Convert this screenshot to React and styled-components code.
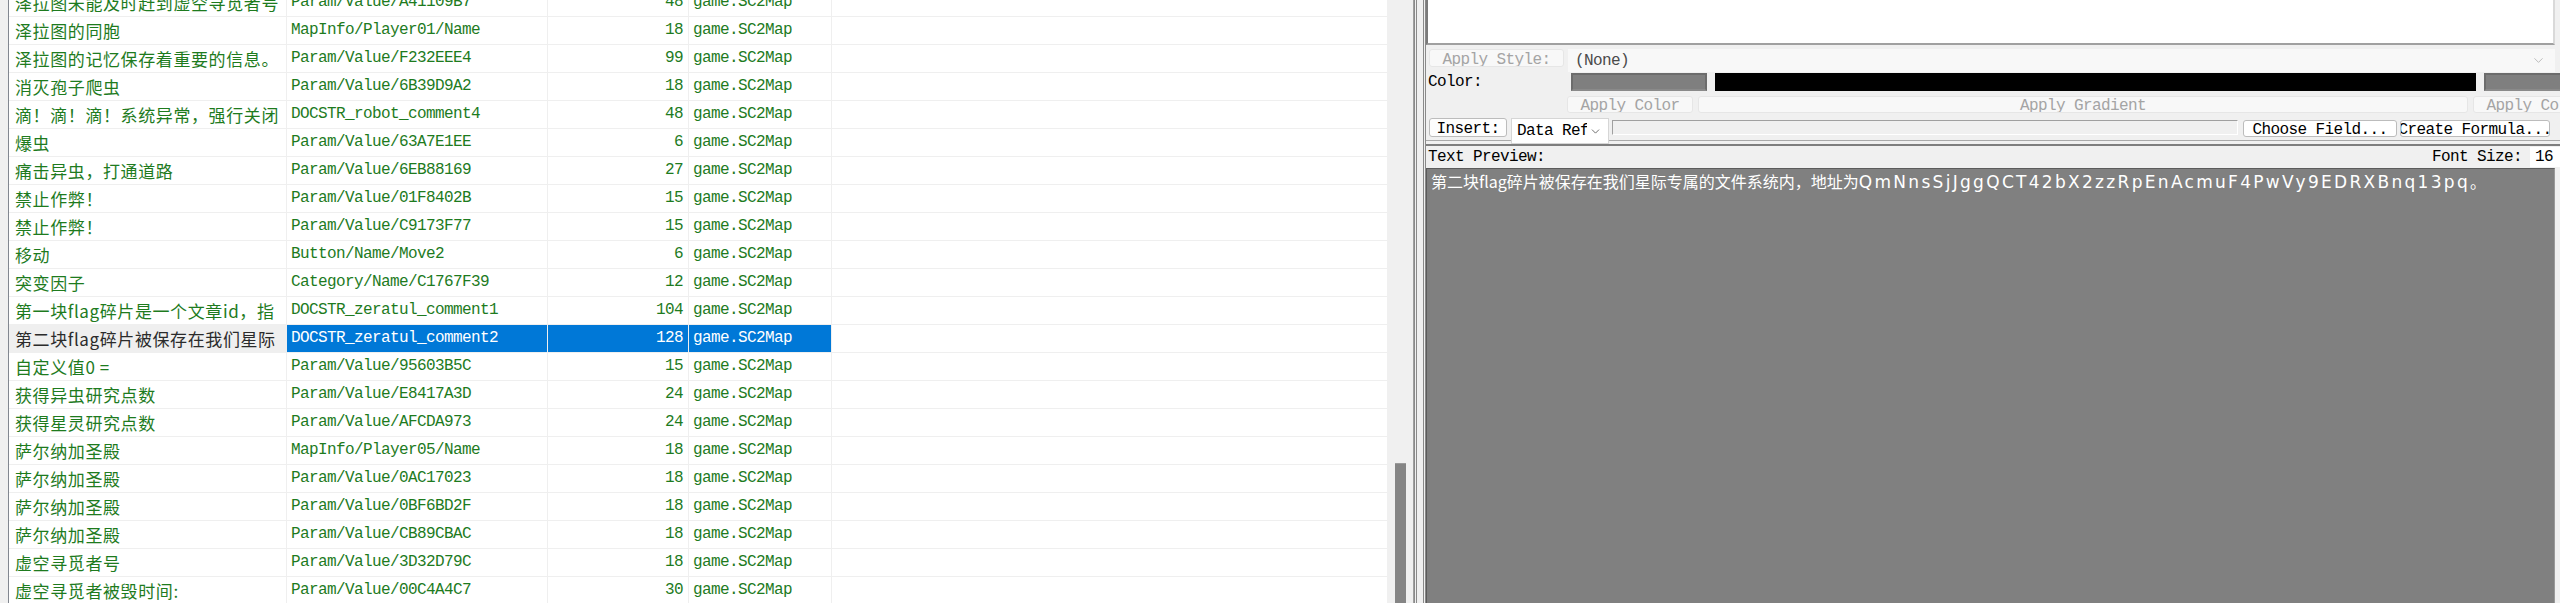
import React from 'react'
import styled, { createGlobalStyle } from 'styled-components'
import { ChevronDown } from 'lucide-react'

const GlobalStyle = createGlobalStyle`
  html, body { margin: 0; padding: 0; background: #f0f0f0; overflow: hidden; }
  #root { width: 2560px; height: 603px; }
`

const MONO = `"Liberation Mono", "DejaVu Sans Mono", monospace`
const CJK = `"Noto Sans CJK SC", "Noto Sans", sans-serif`

const rows = [
  ['泽拉图未能及时赶到虚空寻觅者号', 'Param/Value/A41109B7', 48],
  ['泽拉图的同胞', 'MapInfo/Player01/Name', 18],
  ['泽拉图的记忆保存着重要的信息。', 'Param/Value/F232EEE4', 99],
  ['消灭孢子爬虫', 'Param/Value/6B39D9A2', 18],
  ['滴！滴！滴！系统异常，强行关闭', 'DOCSTR_robot_comment4', 48],
  ['爆虫', 'Param/Value/63A7E1EE', 6],
  ['痛击异虫，打通道路', 'Param/Value/6EB88169', 27],
  ['禁止作弊！', 'Param/Value/01F8402B', 15],
  ['禁止作弊！', 'Param/Value/C9173F77', 15],
  ['移动', 'Button/Name/Move2', 6],
  ['突变因子', 'Category/Name/C1767F39', 12],
  ['第一块flag碎片是一个文章id，指', 'DOCSTR_zeratul_comment1', 104],
  ['第二块flag碎片被保存在我们星际', 'DOCSTR_zeratul_comment2', 128, true],
  ['自定义值0 =', 'Param/Value/95603B5C', 15],
  ['获得异虫研究点数', 'Param/Value/E8417A3D', 24],
  ['获得星灵研究点数', 'Param/Value/AFCDA973', 24],
  ['萨尔纳加圣殿', 'MapInfo/Player05/Name', 18],
  ['萨尔纳加圣殿', 'Param/Value/0AC17023', 18],
  ['萨尔纳加圣殿', 'Param/Value/0BF6BD2F', 18],
  ['萨尔纳加圣殿', 'Param/Value/CB89CBAC', 18],
  ['虚空寻觅者号', 'Param/Value/3D32D79C', 18],
  ['虚空寻觅者被毁时间:', 'Param/Value/00C4A4C7', 30],
]

const Window = styled.div`
  display: flex;
  width: 2560px;
  height: 603px;
  overflow: hidden;
  background: #f0f0f0;
  font-family: ${MONO};
  font-size: 16px;
  letter-spacing: -0.6px;
`

const StringsPane = styled.div`
  flex: 0 0 1414px;
  display: flex;
  box-sizing: border-box;
  border-right: 1px solid #a0a0a0;
  overflow: hidden;
`

const Gutter = styled.div`
  flex: 0 0 8px;
  border-right: 1px solid #828790;
`

const Grid = styled.div`
  flex: 0 0 1378px;
  background: #fff;
  overflow: hidden;
`

const RowList = styled.div`
  margin-top: -11px;
`

const Row = styled.div`
  display: grid;
  grid-template-columns: 278px 261px 141px 143px 1fr;
  height: 28px;
  box-sizing: border-box;
  border-bottom: 1px solid #efefef;
`

const Cell = styled.div`
  line-height: 27px;
  white-space: nowrap;
  overflow: hidden;
  padding: 0 4px;
  border-right: 1px solid #efefef;
  color: ${({ $sel }) => ($sel ? '#fff' : '#1e7b1e')};
  background: ${({ $sel }) => ($sel ? '#0078d7' : 'transparent')};
`

const NameCell = styled(Cell)`
  font-family: ${CJK};
  font-size: 17px;
  letter-spacing: 0.6px;
  padding-left: 6px;
  color: ${({ $sel }) => ($sel ? '#2b2b2b' : '#1e7b1e')};
  background: ${({ $sel }) => ($sel ? '#efefef' : 'transparent')};
`

const CountCell = styled(Cell)`
  text-align: right;
  padding-right: 5px;
`

const FillCell = styled.div``

const Track = styled.div`
  flex: 1;
  padding-top: 463px;
  background: #f0f0f0;
`

const Thumb = styled.div`
  width: 11px;
  height: 200px;
  margin-left: 8px;
  background: #858585;
  border-top: 1px solid #9b9b9b;
`

const Splitter = styled.div`
  flex: 0 0 12px;
  box-sizing: border-box;
  border-left: 3px double #8a8a8a;
  border-right: 3px double #8a8a8a;
  background: #f0f0f0;
`

const EditPane = styled.div`
  flex: 1;
  display: flex;
  flex-direction: column;
  overflow: hidden;
`

const Editor = styled.div`
  height: 45px;
  flex: 0 0 45px;
  box-sizing: border-box;
  margin-right: 5px;
  background: #fff;
  border-left: 2px solid #7a7a7a;
  border-right: 2px solid #d9d9d9;
  border-bottom: 2px solid #a0a0a0;
`

const ControlRow = styled.div`
  display: flex;
  align-items: flex-start;
  flex: 0 0 ${({ $h }) => $h}px;
  height: ${({ $h }) => $h}px;
  margin-top: ${({ $mt }) => $mt}px;
  padding-left: ${({ $pl }) => $pl}px;
  gap: ${({ $gap }) => $gap || 4}px;
  padding-right: 5px;
`

const Button = styled.div`
  flex: 0 0 ${({ $w }) => $w}px;
  width: ${({ $w }) => $w}px;
  height: ${({ $h }) => $h || 17}px;
  margin-top: ${({ $mt }) => $mt || 0}px;
  box-sizing: border-box;
  border: 1px solid ${({ $off }) => ($off ? '#e6e6e6' : '#bcbcbc')};
  border-radius: 3px;
  background: ${({ $off }) => ($off ? '#f8f8f8' : '#fdfdfd')};
  color: ${({ $off }) => ($off ? '#a4a4a4' : '#000')};
  display: flex;
  justify-content: center;
  line-height: ${({ $h }) => ($h || 17) + 2}px;
  white-space: nowrap;
  overflow: hidden;
`

const Combo = styled.div`
  flex: ${({ $w }) => ($w ? `0 0 ${$w}px` : '1')};
  height: ${({ $h }) => $h}px;
  box-sizing: border-box;
  display: flex;
  align-items: center;
  justify-content: space-between;
  padding: 0 8px 0 ${({ $pl }) => $pl || 6}px;
  background: ${({ $white }) => ($white ? '#fff' : '#f8f8f8')};
  border: 1px solid ${({ $white }) => ($white ? '#d6d6d6' : '#f8f8f8')};
  color: ${({ $white }) => ($white ? '#000' : '#4a4a4a')};
  position: relative;
  z-index: 1;
`

const ComboText = styled.span`
  width: ${({ $w }) => ($w ? `${$w}px` : 'auto')};
  overflow: hidden;
  white-space: nowrap;
`

const Label = styled.div`
  flex: 0 0 ${({ $w }) => ($w ? `${$w}px` : 'auto')};
  color: #000;
  line-height: 18px;
  white-space: nowrap;
`

const Swatch = styled.div`
  flex: 0 0 ${({ $w }) => $w}px;
  height: 18px;
  box-sizing: border-box;
  background: ${({ $c }) => $c};
  border: 2px solid ${({ $c }) => ($c === '#000' ? '#000' : '#6c6c6c')};
  border-bottom-color: ${({ $c }) => ($c === '#000' ? '#000' : '#8a8a8a')};
`

const TextField = styled.div`
  flex: 0 0 ${({ $w }) => $w}px;
  height: 15px;
  margin-top: 2px;
  box-sizing: border-box;
  background: #f0f0f0;
  border-top: 1px solid #a0a0a0;
  border-left: 1px solid #a0a0a0;
  border-bottom: 1px solid #fff;
  border-right: 1px solid #fff;
`

const Divider = styled.div`
  flex: 0 0 6px;
  box-sizing: border-box;
  border-top: 1px solid #a9a9a9;
  border-bottom: 2px solid #7e7e7e;
`

const PreviewHead = styled.div`
  flex: 0 0 22px;
  display: flex;
  align-items: center;
  justify-content: space-between;
  padding-left: 2px;
  margin-right: -10px;
`

const SizeGroup = styled.div`
  display: flex;
  align-items: center;
  gap: 8px;
`

const SizeInput = styled.div`
  width: 40px;
  height: 20px;
  line-height: 20px;
  background: #fff;
  padding-left: 5px;
  box-sizing: border-box;
  color: #000;
`

const Preview = styled.div`
  flex: 1;
  margin-right: 5px;
  background: #808080;
  border-top: 1px solid #5c5c5c;
  border-left: 1px solid #5c5c5c;
  border-right: 1px solid #9a9a9a;
  padding: 1px 4px;
  color: #fff;
  font-family: ${CJK};
  font-size: 16px;
  letter-spacing: 0;
  line-height: 22px;
  white-space: nowrap;
`

const Wide = styled.span`
  font-family: "DejaVu Sans", sans-serif;
  font-size: 17px;
  letter-spacing: 2.3px;
`

const StringRow = ({ name, keyName, count, sel }) => (
  <Row>
    <NameCell $sel={sel}>{name}</NameCell>
    <Cell $sel={sel}>{keyName}</Cell>
    <CountCell $sel={sel}>{count}</CountCell>
    <Cell $sel={sel}>game.SC2Map</Cell>
    <FillCell />
  </Row>
)

export default function App() {
  return (
    <Window>
      <GlobalStyle />
      <StringsPane>
        <Gutter />
        <Grid>
          <RowList>
            {rows.map(([name, key, count, sel], i) => (
              <StringRow key={i} name={name} keyName={key} count={count} sel={sel} />
            ))}
          </RowList>
        </Grid>
        <Track>
          <Thumb />
        </Track>
      </StringsPane>
      <Splitter />
      <EditPane>
        <Editor />
        <ControlRow $h={23} $mt={4} $pl={3}>
          <Button $w={135} $h={18} $off>Apply Style:</Button>
          <Combo $h={23}>
            <ComboText>(None)</ComboText>
            <ChevronDown size={15} strokeWidth={1.2} color="#a8a8a8" />
          </Combo>
        </ControlRow>
        <ControlRow $h={18} $mt={1} $pl={2} $gap={0}>
          <Label $w={139}>Color:</Label>
          <Swatch $w={136} $c="#7f7f7f" />
          <Swatch $w={761} $c="#000" style={{ marginLeft: 4 }} />
          <Swatch $w={136} $c="#7f7f7f" style={{ marginLeft: 4 }} />
        </ControlRow>
        <ControlRow $h={17} $mt={5} $pl={141} $gap={5}>
          <Button $w={126} $off>Apply Color</Button>
          <Button $w={770} $off>Apply Gradient</Button>
          <Button $w={126} $off>Apply Color</Button>
        </ControlRow>
        <ControlRow $h={22} $mt={5} $pl={3} $gap={3}>
          <Button $w={78} $h={19}>Insert:</Button>
          <Combo $w={98} $h={26} $white $pl={5} style={{ marginLeft: 1, paddingRight: 6 }}>
            <ComboText $w={70}>Data Ref</ComboText>
            <ChevronDown size={13} strokeWidth={1.4} color="#444" />
          </Combo>
          <TextField $w={626} />
          <Button $w={154} $mt={2} style={{ marginLeft: 2, background: '#fff' }}>Choose Field...</Button>
          <Button $w={150} $mt={2} style={{ background: '#fff' }}>Create Formula...</Button>
        </ControlRow>
        <Divider />
        <PreviewHead>
          <Label>Text Preview:</Label>
          <SizeGroup>
            <Label>Font Size:</Label>
            <SizeInput>16</SizeInput>
          </SizeGroup>
        </PreviewHead>
        <Preview>
          第二块flag碎片被保存在我们星际专属的文件系统内，地址为
          <Wide>QmNnsSjJggQCT42bX2zzRpEnAcmuF4PwVy9EDRXBnq13pq</Wide>。
        </Preview>
      </EditPane>
    </Window>
  )
}
